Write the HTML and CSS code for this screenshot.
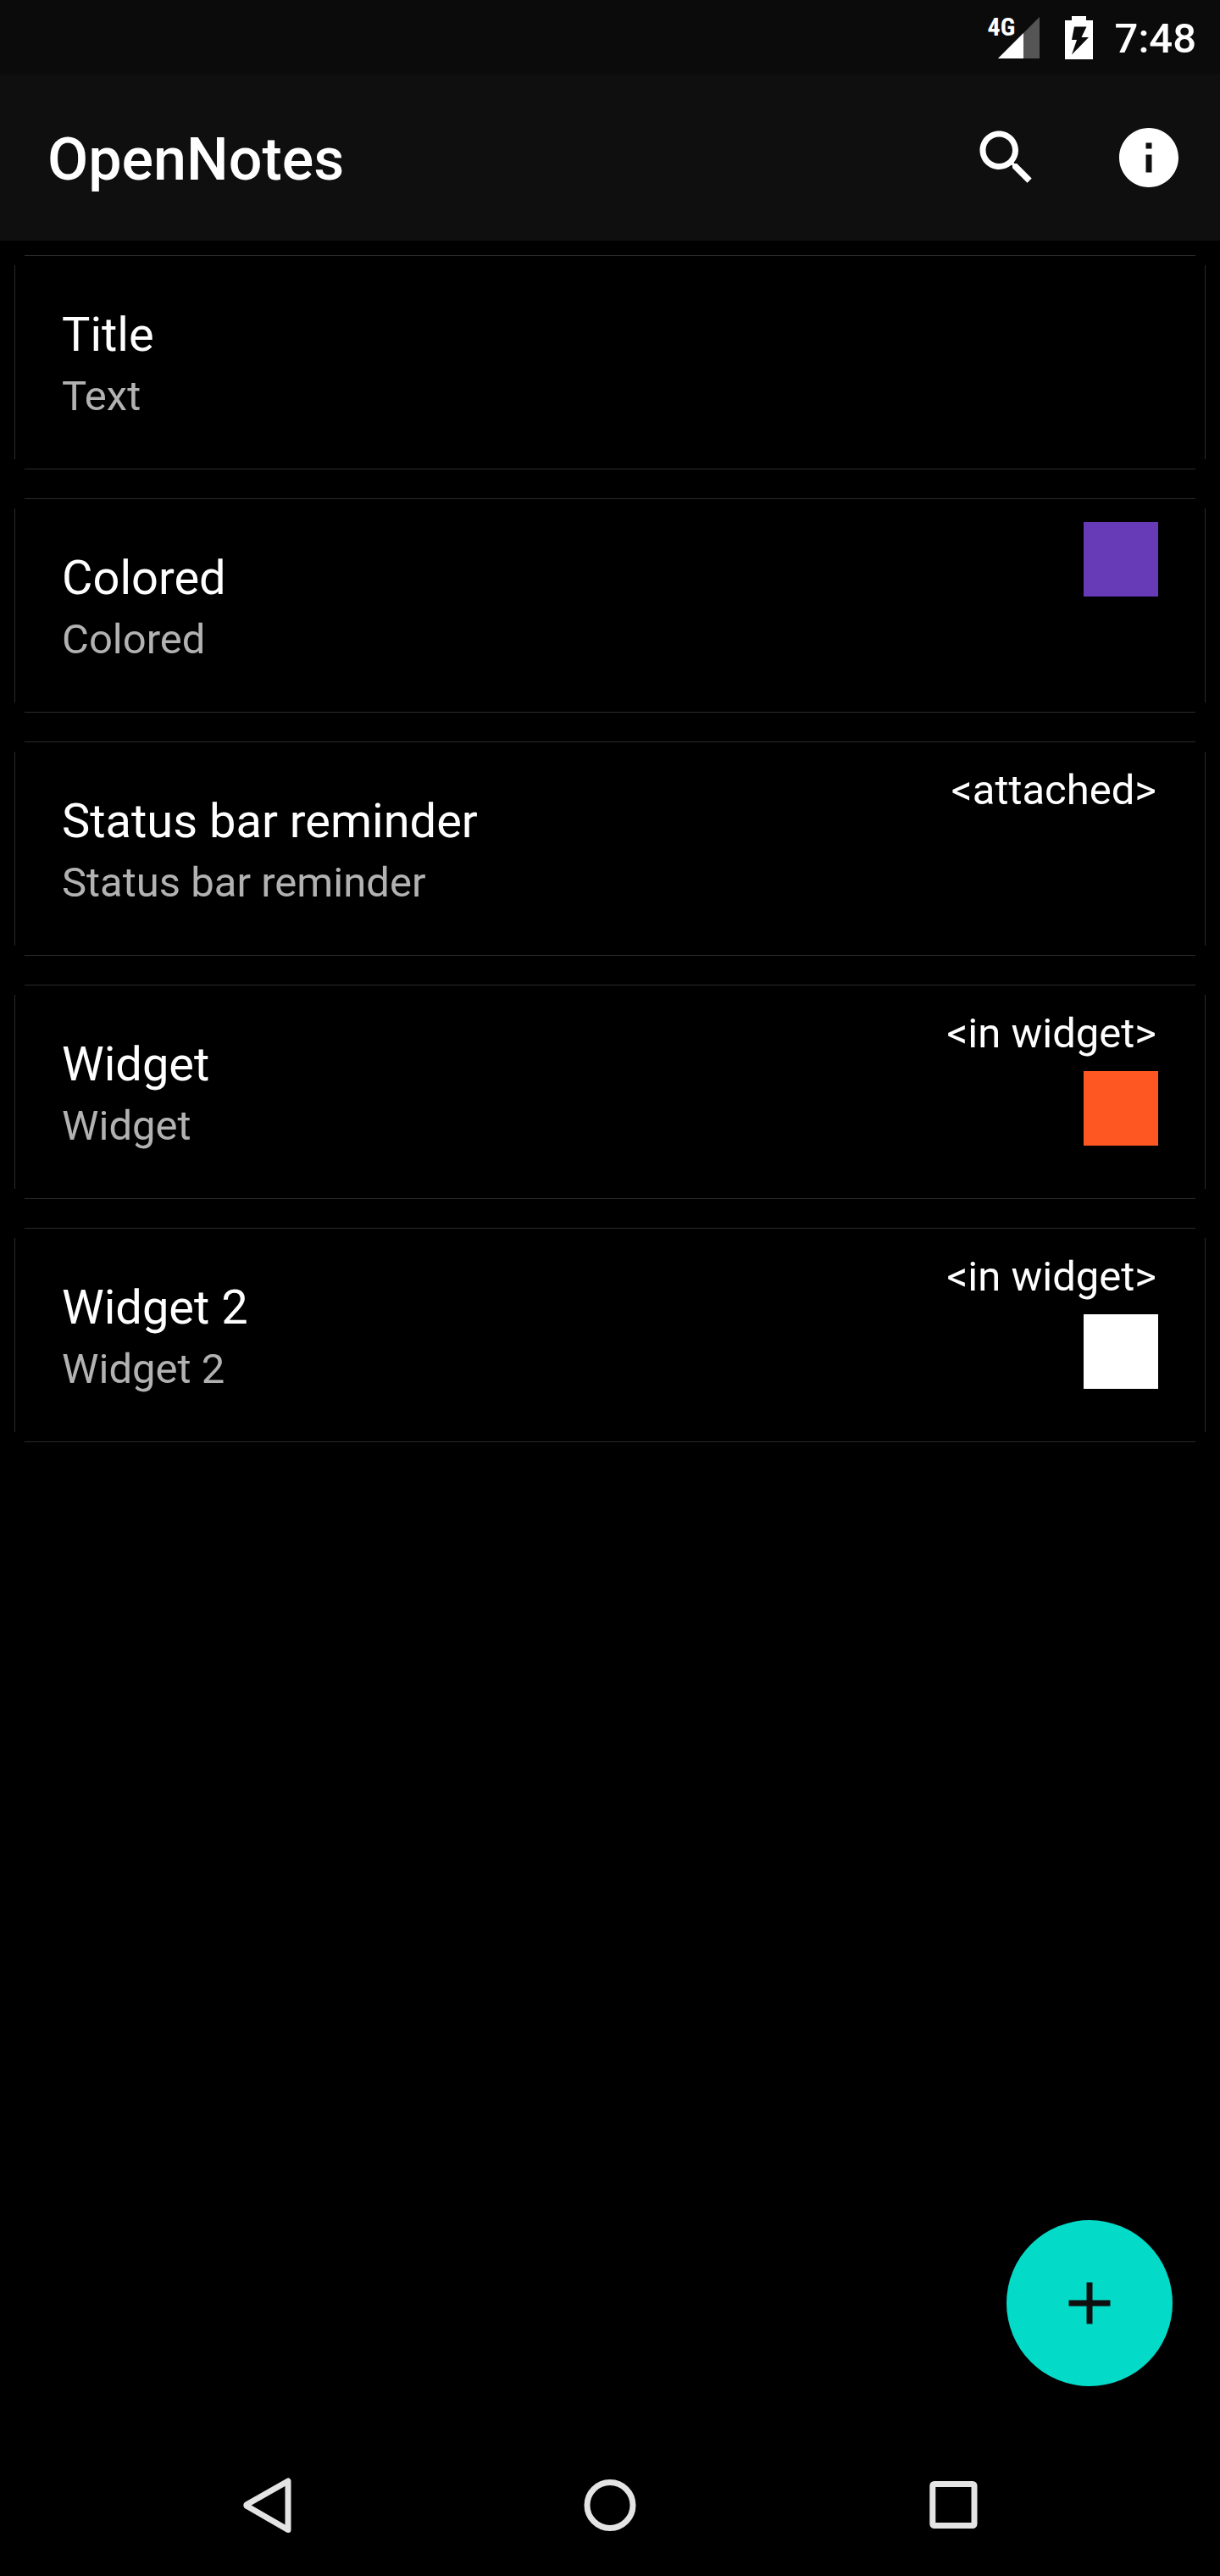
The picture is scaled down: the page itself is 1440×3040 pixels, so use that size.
FILE: index.html
```html
<!DOCTYPE html>
<html lang="en">
<head>
<meta charset="utf-8">
<meta name="viewport" content="width=device-width, initial-scale=1">
<title>OpenNotes</title>
<link rel="stylesheet" href="styles.css">
</head>
<body>
<div class="screen">
  <div class="status-bar">
    <div class="signal">
      <span class="network">4G</span>
      <svg class="signal-icon" viewBox="0 0 49 49" aria-hidden="true"><path fill="#555" d="M49 0V49H0z"/><path fill="#fff" d="M30 19V49H0z"/></svg>
    </div>
    <svg class="battery-icon" viewBox="0 0 33 51" aria-hidden="true"><path fill="#fff" fill-rule="evenodd" d="M8 0H25V5H33V51H0V5H8zM11 12.500L8 28H14L8 45.500L28 25H19.500L25.500 12.500z"/></svg>
    <time class="clock">7:48</time>
  </div>
  <header class="app-bar">
    <h1 class="app-title">OpenNotes</h1>
    <button class="icon-button" type="button" aria-label="Search">
      <svg class="icon" viewBox="0 0 24 24"><path d="M15.500 14h-.79l-.28-.27C15.410 12.590 16 11.110 16 9.500 16 5.910 13.090 3 9.500 3S3 5.910 3 9.500 5.910 16 9.500 16c1.610 0 3.090-.59 4.230-1.570l.27.280v.79l5 4.990L20.490 19l-4.990-5zm-6 0C7.010 14 5 11.990 5 9.500S7.010 5 9.500 5 14 7.010 14 9.500 11.990 14 9.500 14z"/></svg>
    </button>
    <button class="icon-button" type="button" aria-label="About">
      <svg class="icon" viewBox="0 0 24 24"><path d="M12 2C6.480 2 2 6.480 2 12s4.480 10 10 10 10-4.480 10-10S17.520 2 12 2zm1 15h-2v-6h2v6zm0-8h-2V7h2v2z"/></svg>
    </button>
  </header>
  <main class="content">
    <ul class="notes">
      <li class="note">
        <div class="note-body"><h2 class="note-title">Title</h2><p class="note-text">Text</p></div>
      </li>
      <li class="note">
        <div class="note-body"><h2 class="note-title">Colored</h2><p class="note-text">Colored</p></div>
        <div class="note-meta"><span class="swatch swatch-purple"></span></div>
      </li>
      <li class="note">
        <div class="note-body"><h2 class="note-title">Status bar reminder</h2><p class="note-text">Status bar reminder</p></div>
        <div class="note-meta"><span class="note-tag">&lt;attached&gt;</span></div>
      </li>
      <li class="note">
        <div class="note-body"><h2 class="note-title">Widget</h2><p class="note-text">Widget</p></div>
        <div class="note-meta"><span class="note-tag">&lt;in widget&gt;</span><span class="swatch swatch-orange"></span></div>
      </li>
      <li class="note">
        <div class="note-body"><h2 class="note-title">Widget 2</h2><p class="note-text">Widget 2</p></div>
        <div class="note-meta"><span class="note-tag">&lt;in widget&gt;</span><span class="swatch swatch-white"></span></div>
      </li>
    </ul>
    <button class="fab" type="button" aria-label="Add note">
      <svg class="icon" viewBox="0 0 24 24"><path d="M19 13h-6v6h-2v-6H5v-2h6V5h2v6h6v2z"/></svg>
    </button>
  </main>
  <nav class="nav-bar" aria-label="System">
    <button class="nav-button" type="button" aria-label="Back">
      <svg class="nav-icon" viewBox="0 0 84 84"><path d="M68 14V71.500L19.500 43.500Q18 42.500 19.500 41.500z"/></svg>
    </button>
    <button class="nav-button" type="button" aria-label="Home">
      <svg class="nav-icon" viewBox="0 0 84 84"><circle cx="42" cy="42.500" r="27"/></svg>
    </button>
    <button class="nav-button" type="button" aria-label="Overview">
      <svg class="nav-icon" viewBox="0 0 84 84"><rect x="16.800" y="17.500" width="49.200" height="49" rx="2"/></svg>
    </button>
  </nav>
</div>
</body>
</html>
```
FILE: styles.css
```css
* {
  box-sizing: border-box;
  margin: 0;
  padding: 0;
}

body {
  background: #000;
  color: #fff;
  font-family: Roboto, "Liberation Sans", sans-serif;
}

button {
  border: 0;
  background: none;
  color: inherit;
  font: inherit;
  cursor: pointer;
}

.screen {
  display: flex;
  flex-direction: column;
  min-height: 100vh;
}

.status-bar {
  display: flex;
  justify-content: flex-end;
  align-items: center;
  height: 88px;
  padding-right: 28px;
  background: #0b0b0b;
}

.signal {
  display: flex;
  align-items: flex-start;
  margin-right: 30px;
}

.network {
  width: 12px;
  font-family: "Roboto Condensed", "Liberation Sans Narrow", Roboto, sans-serif;
  font-size: 30px;
  font-weight: 700;
  line-height: 24px;
}

.signal-icon {
  display: block;
  width: 49px;
  height: 49px;
}

.network,
.signal-icon {
  flex: none;
}

.battery-icon {
  width: 33px;
  height: 51px;
  margin-right: 26px;
}

.clock {
  padding-top: 4px;
  font-size: 49px;
  font-weight: 500;
  line-height: 58px;
}

.app-bar {
  display: flex;
  align-items: center;
  height: 196px;
  padding-left: 56px;
  background: #0f0f0f;
}

.app-title {
  flex: 1;
  padding-top: 4px;
  font-size: 70px;
  font-weight: 500;
  line-height: 82px;
}

.icon-button {
  display: flex;
  justify-content: center;
  align-items: center;
  width: 168px;
  height: 168px;
}

.icon {
  display: block;
  width: 84px;
  height: 84px;
  fill: currentColor;
}

.content {
  display: flex;
  flex: 1;
  flex-direction: column;
  justify-content: space-between;
  padding: 17px 17px 56px;
}

.notes {
  display: flex;
  flex-direction: column;
  gap: 34px;
  list-style: none;
}

/* Hairline edges that stop short of the corners */
.note {
  --edge: #2a2a2a;
  display: flex;
  justify-content: space-between;
  min-height: 253px;
  padding: 28px 56px;
  background:
    linear-gradient(var(--edge), var(--edge)) top / calc(100% - 24px) 1px no-repeat,
    linear-gradient(var(--edge), var(--edge)) bottom / calc(100% - 24px) 1px no-repeat,
    linear-gradient(var(--edge), var(--edge)) left / 1px calc(100% - 24px) no-repeat,
    linear-gradient(var(--edge), var(--edge)) right / 1px calc(100% - 24px) no-repeat;
}

.note-body {
  padding-top: 32px;
}

.note-title {
  font-size: 56px;
  font-weight: 400;
  line-height: 68px;
}

.note-text {
  margin-top: 10px;
  color: #b2b2b2;
  font-size: 49px;
  line-height: 58px;
}

.note-meta {
  display: flex;
  flex-direction: column;
  align-items: flex-end;
  gap: 14px;
}

.note-tag {
  padding-right: 2px;
  font-size: 49px;
  line-height: 60px;
}

.swatch {
  width: 88px;
  height: 88px;
}

.swatch-purple {
  background: #673ab7;
}

.swatch-orange {
  background: #ff5722;
}

.swatch-white {
  background: #fff;
}

.fab {
  display: flex;
  justify-content: center;
  align-items: center;
  align-self: flex-end;
  width: 196px;
  height: 196px;
  margin: 56px 39px 0 0;
  border-radius: 50%;
  background: #03dbc8;
  color: #0f0f0f;
}

.nav-bar {
  display: flex;
  justify-content: center;
  align-items: center;
  gap: 126px;
  height: 168px;
}

.nav-button {
  display: flex;
  justify-content: center;
  align-items: center;
  width: 280px;
  height: 168px;
}

.nav-icon {
  display: block;
  width: 84px;
  height: 84px;
  fill: none;
  stroke: #e4e4e4;
  stroke-width: 7px;
  stroke-linejoin: round;
}
```
